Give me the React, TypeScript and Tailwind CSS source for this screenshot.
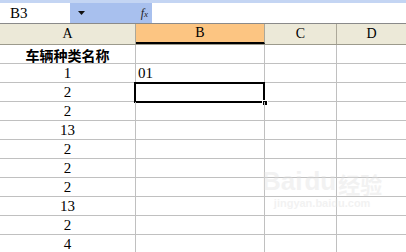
import React from "react";

const cols = [
  { key: "A", w: 136 },
  { key: "B", w: 129 },
  { key: "C", w: 72 },
  { key: "D", w: 70 },
];

const colA = ["1", "2", "2", "13", "2", "2", "2", "13", "2", "4"];

export default function App() {
  return (
    <div className="relative w-[406px] h-[252px] overflow-hidden bg-white">
      {/* formula bar */}
      <div className="h-[24px] flex flex-col border-b border-[#8a8a8a]">
        <div className="h-[3px] bg-[#c4d5f3]" />
        <div className="flex-1 flex">
          <div className="w-[70px] bg-white flex items-center pl-[10px] text-[15px] leading-none font-['Liberation_Serif',serif] text-black">
            B3
          </div>
          <div className="w-[82px] bg-[#a8c0ee] flex items-center justify-between pl-[8px] pr-[4px]">
            <svg width="8" height="5" viewBox="0 0 8 5">
              <path d="M0 0 H7 L3.5 4 Z" fill="#111" />
            </svg>
            <span className="text-[12px] italic leading-none font-['Liberation_Serif',serif] text-[#222]">
              f<span className="text-[9px]">x</span>
            </span>
          </div>
          <div className="flex-1 bg-white" />
        </div>
      </div>
      {/* column headers */}
      <div className="flex h-[21px] border-b border-[#9c9a8c]">
        {cols.map((c) => (
          <div
            key={c.key}
            style={{ width: c.w }}
            className={`shrink-0 border-r border-[#aca899] flex items-center justify-center text-[14px] font-normal leading-none font-['Liberation_Serif',serif] text-black ${
              c.key === "B" ? "bg-[#fcc582] border-b-2 border-b-black" : "bg-[#ece9d8]"
            }`}
          >
            {c.key}
          </div>
        ))}
      </div>
      {/* rows */}
      {Array.from({ length: 11 }).map((_, r) => (
        <div key={r} className="flex h-[19px] border-b border-[#c0c0c0]">
          {cols.map((c, ci) => {
            let content: React.ReactNode = null;
            if (ci === 0) {
              if (r === 0)
                content = (
                  <span className="font-bold text-[14px] leading-none font-['Noto_Sans_CJK_SC',sans-serif] text-black">
                    车辆种类名称
                  </span>
                );
              else
                content = (
                  <span className="text-[15px] leading-none font-['Liberation_Serif',serif] text-black">
                    {colA[r - 1]}
                  </span>
                );
            }
            const isSel = ci === 1 && r === 2;
            return (
              <div
                key={c.key}
                style={{ width: c.w }}
                className={`relative shrink-0 border-r border-[#c0c0c0] flex items-end pb-[1px] ${
                  ci === 0 ? "justify-center" : "justify-start pl-[2px]"
                }`}
              >
                {content}
                {ci === 1 && r === 1 && (
                  <span className="text-[15px] leading-none font-['Liberation_Serif',serif] text-black">
                    01
                  </span>
                )}
                {isSel && (
                  <>
                    <div className="absolute left-[-2px] top-[-1px] w-[131px] h-[21px] border-2 border-black" />
                    <div className="absolute left-[126px] top-[17px] w-[6px] h-[6px] bg-black border border-white" />
                  </>
                )}
              </div>
            );
          })}
        </div>
      ))}
      {/* watermark */}
      <div className="absolute left-[262px] top-[168px] flex flex-col items-center opacity-40 pointer-events-none">
        <div className="flex items-end gap-[2px] text-[26px] leading-none font-bold font-['Liberation_Sans',sans-serif] text-[#e0e0e0]">
          <span>Bai</span>
          <span>du</span>
          <span className="text-[22px] font-['Noto_Sans_CJK_SC',sans-serif]">经验</span>
        </div>
        <div className="text-[11px] leading-none mt-[4px] font-bold font-['Liberation_Sans',sans-serif] text-[#e0e0e0]">
          jingyan.baidu.com
        </div>
      </div>
    </div>
  );
}
